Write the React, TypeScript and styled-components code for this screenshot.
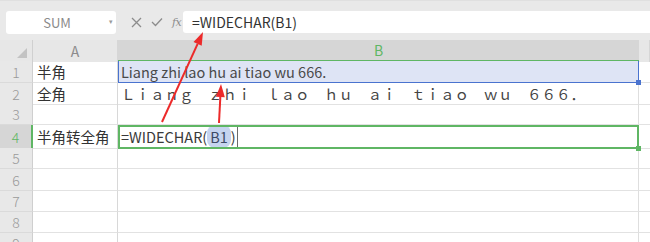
import React from 'react';
import styled, {createGlobalStyle, css} from 'styled-components';

const GlobalStyle = createGlobalStyle`
  html, body {
    margin: 0;
    padding: 0;
    background: #ffffff;
  }
  body {
    font-family: "Noto Sans CJK SC", "Noto Sans", sans-serif;
  }
`

const COLS = '33px 85px 521px 1fr'
const GREEN = '#5fb664'
const BLUE = '#4a73cf'

type RowData = {
    n: number
    h: number
    a?: string
    b?: React.ReactNode
    selected?: boolean
    active?: boolean
}

const HALF = 'Liang zhi lao hu ai tiao wu 666.'
const FULL = 'Ｌｉａｎｇ　ｚｈｉ　ｌａｏ　ｈｕ　ａｉ　ｔｉａｏ　ｗｕ　６６６．'

// arrow from tail to tip, head drawn as a filled triangle
const Arrow = ({x1, y1, x2, y2}: { x1: number, y1: number, x2: number, y2: number }) => {
    const dx = x2 - x1, dy = y2 - y1
    const len = Math.hypot(dx, dy)
    const ux = dx / len, uy = dy / len
    const bx = x2 - ux * 13, by = y2 - uy * 13
    const px = -uy * 4.5, py = ux * 4.5
    return (
        <g>
            <line x1={x1} y1={y1} x2={bx} y2={by} stroke="#ec2a2a" strokeWidth={2}/>
            <polygon points={`${x2},${y2} ${bx + px},${by + py} ${bx - px},${by - py}`} fill="#ec2a2a"/>
        </g>
    )
}

export default function App() {
    const rows: RowData[] = [
        {n: 1, h: 22, a: '半角', b: HALF, selected: true},
        {n: 2, h: 21, a: '全角', b: <Wide>{FULL}</Wide>},
        {n: 3, h: 21},
        {
            n: 4, h: 23, a: '半角转全角', active: true,
            b: <>=WIDECHAR(<Ref>B1</Ref>)<Caret/></>
        },
        {n: 5, h: 21},
        {n: 6, h: 22},
        {n: 7, h: 21},
        {n: 8, h: 21},
        {n: 9, h: 21},
    ]

    return (
        <Screen>
            <GlobalStyle/>
            <Toolbar>
                <NameBox>
                    <span>SUM</span>
                    <DropCaret>▾</DropCaret>
                </NameBox>
                <Tools>
                    <svg width="11" height="11" viewBox="0 0 11 11">
                        <path d="M1 1 L10 10 M10 1 L1 10" stroke="#8c8c8c" strokeWidth="1.3" fill="none"/>
                    </svg>
                    <svg width="12" height="10" viewBox="0 0 12 10">
                        <path d="M1 5 L4.5 8.5 L11 1.5" stroke="#8c8c8c" strokeWidth="1.3" fill="none"/>
                    </svg>
                    <Fx>fx</Fx>
                </Tools>
                <FormulaBar>=WIDECHAR(B1)</FormulaBar>
            </Toolbar>

            <Sheet>
                <HeaderRow>
                    <Corner>
                        <svg width="10" height="10" viewBox="0 0 10 10">
                            <polygon points="10,0 10,10 0,10" fill="#c3c3c3"/>
                        </svg>
                    </Corner>
                    <ColHead>A</ColHead>
                    <ColHead $current>B</ColHead>
                    <ColHead/>
                </HeaderRow>

                {rows.map(r => (
                    <Row key={r.n} $h={r.h}>
                        <RowHead $current={r.active}>{r.n}</RowHead>
                        <CellA>{r.a}</CellA>
                        <CellB $selected={r.selected} $active={r.active}>{r.b}</CellB>
                        <CellRest/>
                    </Row>
                ))}
            </Sheet>

            <Arrows width="650" height="242" viewBox="0 0 650 242">
                <Arrow x1={162} y1={122} x2={203} y2={32}/>
                <Arrow x1={219} y1={123} x2={221} y2={84}/>
            </Arrows>
        </Screen>
    );
}

const Screen = styled.div`
  position: relative;
  width: 650px;
  height: 242px;
  overflow: hidden;
  background: #fff;
`

const Toolbar = styled.div`
  height: 40px;
  box-sizing: border-box;
  padding: 10px 0 7px 6px;
  display: flex;
  align-items: stretch;
  background: #e9e9e9;
  border-top: 1px solid #e0e0e0;
`

const NameBox = styled.div`
  width: 110px;
  height: 23px;
  background: #fff;
  border-radius: 3px;
  display: flex;
  align-items: center;
  justify-content: center;
  position: relative;
  font-size: 13px;
  color: #8a8a8a;
  padding-right: 8px;
  box-sizing: border-box;
`

const DropCaret = styled.span`
  position: absolute;
  right: 3px;
  top: 5px;
  font-size: 7px;
  color: #9a9a9a;
`

const Tools = styled.div`
  width: 67px;
  display: flex;
  align-items: center;
  gap: 9px;
  padding-left: 15px;
  box-sizing: border-box;
`

const Fx = styled.span`
  font-family: "DejaVu Serif", serif;
  font-style: italic;
  font-size: 11px;
  color: #8c8c8c;
  letter-spacing: -0.5px;
`

const FormulaBar = styled.div`
  flex: 1;
  background: #fff;
  border-radius: 3px 0 0 3px;
  display: flex;
  align-items: center;
  padding-left: 9px;
  font-size: 14px;
  color: #333;
`

const Sheet = styled.div`
  display: flex;
  flex-direction: column;
`

const HeaderRow = styled.div`
  display: grid;
  grid-template-columns: ${COLS};
  height: 21px;
`

const Corner = styled.div`
  background: #e7e7e7;
  border-right: 1px solid #d0d0d0;
  display: flex;
  align-items: flex-end;
  justify-content: flex-end;
  padding: 0 5px 4px 0;
`

const ColHead = styled.div<{ $current?: boolean }>`
  display: flex;
  align-items: center;
  justify-content: center;
  font-size: 14px;
  color: #8c8c8c;
  background: #e7e7e7;
  border-right: 1px solid #d6d6d6;
  box-sizing: border-box;
  ${p => p.$current && css`
    background: #d6d6d6;
    color: ${GREEN};
    border-bottom: 2px solid ${GREEN};
    border-right: none;
  `}
`

const Row = styled.div<{ $h: number }>`
  display: grid;
  grid-template-columns: ${COLS};
  height: ${p => p.$h}px;
`

const RowHead = styled.div<{ $current?: boolean }>`
  display: flex;
  align-items: center;
  justify-content: center;
  font-size: 14px;
  font-weight: 300;
  color: #9a9a9a;
  background: #e8e8e8;
  border-right: 1px solid #cfcfcf;
  border-bottom: 1px solid #dadada;
  box-sizing: border-box;
  ${p => p.$current && css`
    background: #d6d6d6;
    color: ${GREEN};
    border-right: 2px solid ${GREEN};
  `}
`

const CellA = styled.div`
  display: flex;
  align-items: center;
  padding-left: 4px;
  font-size: 14.5px;
  color: #333;
  white-space: nowrap;
  border-right: 1px solid #d8d8d8;
  border-bottom: 1px solid #e2e2e2;
  box-sizing: border-box;
`

const CellB = styled.div<{ $selected?: boolean, $active?: boolean }>`
  position: relative;
  display: flex;
  align-items: center;
  padding-left: 3px;
  font-size: 14.5px;
  color: #3a3a3a;
  white-space: nowrap;
  border-bottom: 1px solid #e2e2e2;
  border-right: 1px solid #dedede;
  box-sizing: border-box;

  ${p => p.$selected && css`
    background: #dee4f5;
    color: #4a4a4a;
    &::after {
      content: '';
      position: absolute;
      inset: 0 -1px -1px 0;
      border: 1px solid ${BLUE};
      border-top: none;
    }
    &::before {
      content: '';
      position: absolute;
      right: -3px;
      bottom: -3px;
      width: 5px;
      height: 5px;
      background: ${BLUE};
      z-index: 1;
    }
  `}

  ${p => p.$active && css`
    &::after {
      content: '';
      position: absolute;
      inset: 0 -1px -1px 0;
      border: 2px solid ${GREEN};
    }
    &::before {
      content: '';
      position: absolute;
      right: -3px;
      bottom: -3px;
      width: 5px;
      height: 5px;
      background: ${GREEN};
      z-index: 1;
    }
  `}
`

const CellRest = styled.div`
  border-bottom: 1px solid #e2e2e2;
`

const Wide = styled.span`
  color: #444;
`

const Ref = styled.span`
  background: #c6d4ef;
  border-radius: 8px;
  padding: 1px 3px;
  color: #3d4a66;
`

const Caret = styled.span`
  display: inline-block;
  width: 1px;
  height: 21px;
  margin-left: 1px;
  background: #6a6a6a;
`

const Arrows = styled.svg`
  position: absolute;
  left: 0;
  top: 0;
  pointer-events: none;
`
